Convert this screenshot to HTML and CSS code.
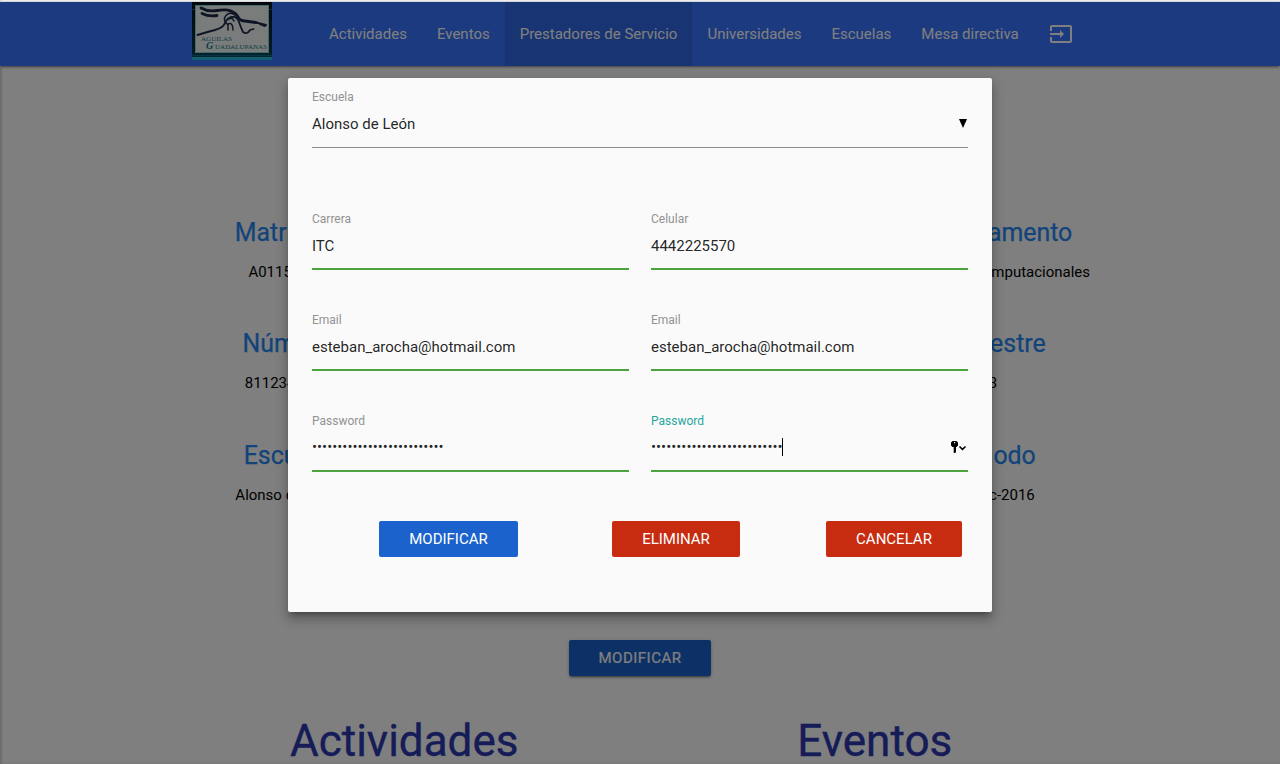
FILE: index.html
```
<!DOCTYPE html>
<html lang="es">
<head>
<meta charset="utf-8">
<title>Prestadores de Servicio</title>
<link rel="stylesheet" href="styles.css">
</head>
<body>
<div class="page">
  <nav class="nav">
    <svg class="logo" viewBox="0 0 80 58" width="80" height="58">
      <defs><linearGradient id="edge" x1="0" y1="0" x2="0" y2="1"><stop offset="0" stop-color="#061018"/><stop offset=".85" stop-color="#0a3648"/><stop offset="1" stop-color="#0e5c74"/></linearGradient></defs>
      <rect width="80" height="58" fill="url(#edge)"/>
      <path d="M0 7.500H80M0 53.500H80" stroke="#0a6a88" stroke-width="1"/>
      <rect y="55" width="80" height="3" fill="#28c0e0"/>
      <rect x="3.500" y="3.500" width="73" height="47" fill="#f4f6f6" stroke="#84d6de"/>
      <g fill="none" stroke="#1d2c48" stroke-linecap="round" stroke-linejoin="round">
        <path d="M9 6Q16 10 25 8.500T39 9Q44 11 46 15T53 19L64 20.500" stroke-width="2.800"/>
        <path d="M64 20.500L74 23M68 22L73 24" stroke-width="2"/>
        <path d="M10 11.500Q17 15 25 13.500" stroke-width="2.800"/>
        <path d="M5.500 33Q15 30 23 28T33 21T40 15" stroke-width="2"/>
        <path d="M40 15Q45 14 47 20T51 30Q55 33 58 28L61.500 27" stroke-width="1.800"/>
        <path d="M36 23Q30 18 34 13.500T43 13M37 17Q40 15 42 19M36 28V22Q41 20 41 28" stroke-width="1.500"/>
      </g>
      <text x="9" y="38.500" class="logo-text" textLength="31">AGUILAS</text>
      <text x="14" y="47" class="logo-initial">G</text>
      <text x="23" y="46.500" class="logo-text" textLength="52">UADALUPANAS</text>
    </svg>
    <div class="links">
      <a class="link">Actividades</a>
      <a class="link">Eventos</a>
      <a class="link active">Prestadores de Servicio</a>
      <a class="link">Universidades</a>
      <a class="link">Escuelas</a>
      <a class="link">Mesa directiva</a>
      <a class="link"><svg class="exit" viewBox="0 0 24 24" width="24" height="24"><path fill="#fff" d="M21 3.010H3c-1.100 0-2 .9-2 2V9h2V4.990h18v14.030H3V15H1v4.010c0 1.100.9 1.980 2 1.980h18c1.100 0 2-.88 2-1.980v-14c0-1.110-.9-2-2-2zM11 16l4-4-4-4v3H1v2h10v3z"/></svg></a>
    </div>
  </nav>
  <main class="content">
    <section class="details">
      <div class="detail"><h5>Matrícula</h5><p>A01154321</p></div>
      <div class="detail"><h5>Departamento</h5><p>Tecnología Computacionales</p></div>
      <div class="detail middle"><h5>Número</h5><p>8112345678</p></div>
      <div class="detail middle"><h5>Semestre</h5><p>3</p></div>
      <div class="detail"><h5>Escuela</h5><p>Alonso de León</p></div>
      <div class="detail"><h5>Periodo</h5><p>Jul-Dic-2016</p></div>
    </section>
    <button class="btn raised">MODIFICAR</button>
    <section class="sections"><h3>Actividades</h3><h3>Eventos</h3></section>
  </main>
</div>
<div class="overlay">
  <div class="modal">
    <div class="field select">
      <label>Escuela</label>
      <div class="value"><span>Alonso de León</span><svg class="caret" width="8" height="9" viewBox="0 0 8 9"><path d="M0 0H8L4 9Z"/></svg></div>
    </div>
    <div class="fields">
      <div class="field"><label>Carrera</label><div class="value">ITC</div></div>
      <div class="field"><label>Celular</label><div class="value">4442225570</div></div>
      <div class="field"><label>Email</label><div class="value">esteban_arocha@hotmail.com</div></div>
      <div class="field"><label>Email</label><div class="value">esteban_arocha@hotmail.com</div></div>
      <div class="field password"><label>Password</label><div class="value">••••••••••••••••••••••••••</div></div>
      <div class="field password focused"><label>Password</label><div class="value"><span class="typed">••••••••••••••••••••••••••</span>
        <svg class="key" width="16" height="12" viewBox="0 0 16 12"><path fill-rule="evenodd" d="M1.500 0H5.500L7 1.500V4.500L5.500 6H5V11L4 12H2.700V6H1.500L0 4.500V1.500ZM3 1V2.200H4.200V1Z"/><path d="M8.500 5.500L11.500 8.300L14.500 5.500" fill="none" stroke="#000" stroke-width="1.600"/></svg></div></div>
    </div>
    <div class="actions">
      <button class="btn modify">MODIFICAR</button>
      <button class="btn danger remove">ELIMINAR</button>
      <button class="btn danger cancel">CANCELAR</button>
    </div>
  </div>
</div>
</body>
</html>
```
FILE: styles.css
```
* { box-sizing: border-box; }
body { margin: 0; font: 15px/22px Roboto, sans-serif; color: rgba(0,0,0,.87); overflow: hidden; }
.page { height: 764px; overflow: hidden; padding-top: 1px; background: #fff; box-shadow: inset 2px 0 2px rgba(0,0,0,.15); }
.nav { position: relative; height: 65px; padding-left: 192px; display: flex; border-top: 1px solid #d4d8dc; background: #3874ff; box-shadow: 0 2px 2px rgba(0,0,0,.14), 0 1px 5px rgba(0,0,0,.12), 0 3px 1px -2px rgba(0,0,0,.2); }
.logo { display: block; }
.logo-text { font: 7px "Liberation Serif", serif; fill: #148090; }
.logo-initial { font: italic bold 10px "Liberation Serif", serif; fill: #087a98; }
.links { display: flex; margin-left: 42px; }
.link { padding: 0 15px; line-height: 64px; color: #fff; white-space: nowrap; }
.link.active { background: rgba(0,0,0,.1); }
.exit { display: block; margin-top: 20px; }
.content { width: 941px; margin: 0 auto; padding-top: 153px; display: flex; flex-direction: column; align-items: center; }
.details { width: 100%; display: grid; grid-template-columns: 235px 235px; justify-content: space-between; grid-auto-rows: 111.5px; text-align: center; }
.detail { white-space: nowrap; }
.detail h5 { margin: 0 0 15px; font-size: 24.9px; line-height: 27px; font-weight: 400; color: #2489f5; -webkit-text-stroke: .25px #2489f5; }
.detail p { margin: 0; color: #000; line-height: 22px; }
.middle h5 { margin: -1px 0 15px; }
.btn { height: 36px; border: 0; border-radius: 2px; padding: 0; font: 15px/36px Roboto, sans-serif; color: #fff; background: #1b62cc; }
.raised { width: 142px; margin-top: 86px; letter-spacing: .5px; box-shadow: 0 2px 2px rgba(0,0,0,.2), 0 1px 5px rgba(0,0,0,.15), 0 3px 1px -2px rgba(0,0,0,.2); -webkit-text-stroke: .2px #fff; }
.sections { width: 100%; display: grid; grid-template-columns: 1fr 1fr; margin-top: 41px; text-align: center; }
.sections h3 { margin: 0 1px 0 0; font-size: 44px; line-height: 48px; font-weight: 400; color: #2c38b0; -webkit-text-stroke: .4px #2c38b0; }
.overlay { position: absolute; top: 2px; left: 0; right: 0; bottom: 0; background: rgba(0,0,0,.5); display: flex; justify-content: center; align-items: flex-start; }
.modal { width: 704px; height: 534px; margin-top: 76px; padding: 12px 24px 0; border-radius: 2px; background: #fafafa; box-shadow: 0 8px 10px 1px rgba(0,0,0,.14), 0 3px 14px 2px rgba(0,0,0,.12), 0 5px 5px -3px rgba(0,0,0,.3); }
.field { height: 58px; border-bottom: 2px solid #4ba53c; }
.select { border-bottom: 1px solid #8e8e8e; }
.field label { display: block; font-size: 12px; line-height: 14px; color: #929292; }
.value { display: flex; justify-content: space-between; align-items: center; height: 20px; margin-top: 10px; line-height: 20px; }
.password .value { margin-top: 9px; }
.focused label { color: #26a69a; }
.typed { height: 18px; line-height: 18px; box-shadow: inset -1px 0 #000; }
.caret { margin: 0 1px 2px 0; }
.key { margin-right: 1px; }
.fields { display: grid; grid-template-columns: 317px 317px; column-gap: 22px; row-gap: 43px; margin-top: 64px; }
.actions { display: flex; margin: 49px 0 0 67px; }
.modify { width: 139px; }
.danger { background: #c82c10; }
.remove { width: 128px; margin-left: 94px; }
.cancel { width: 136px; margin-left: 86px; }
```
